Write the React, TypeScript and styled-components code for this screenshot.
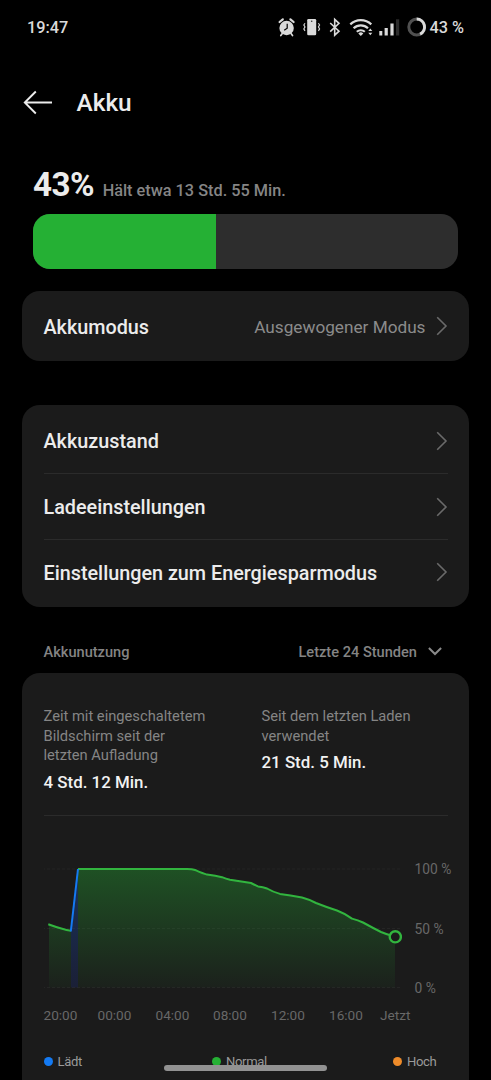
import React from 'react';
import styled, { createGlobalStyle } from 'styled-components';

const GlobalStyle = createGlobalStyle`
  * { box-sizing: border-box; }
  html, body { margin: 0; background: #000; height: 1080px; overflow: hidden; }
  body { font-family: Roboto, "Liberation Sans", sans-serif; color: #ececec; }
  svg { display: block; flex: none; }
`;

const Screen = styled.main`
  position: relative;
  width: 491px;
  height: 1080px;
  overflow: hidden;
  background: #000;
`;

const StatusBar = styled.header`
  display: flex;
  align-items: center;
  justify-content: space-between;
  height: 54px;
  padding: 0 27px;
  font-size: 16.3px;
  font-weight: 500;
  color: #dadada;
`;

const StatusIcons = styled.div`
  display: flex;
  align-items: center;
`;

const StatusPercent = styled.span`
  margin-left: 2px;
  white-space: nowrap;
`;

const TitleBar = styled.div`
  display: flex;
  align-items: center;
  gap: 23.5px;
  height: 98px;
  padding-left: 23px;
`;

const Title = styled.h1`
  margin: 0;
  font-size: 24.4px;
  font-weight: 500;
  line-height: 30px;
`;

const Summary = styled.section`
  padding: 15px 33px 0;
`;

const SummaryText = styled.div`
  display: flex;
  align-items: baseline;
  gap: 8.5px;
  height: 47px;
  line-height: 36px;
`;

const Level = styled.span`
  font-size: 33.2px;
  font-weight: 700;
  letter-spacing: -0.5px;
`;

const Remaining = styled.span`
  font-size: 16.3px;
  font-weight: 500;
  color: #858585;
  white-space: nowrap;
`;

const Gauge = styled.div`
  height: 55px;
  border-radius: 17px;
  overflow: hidden;
  background: #2d2d2d;
`;

const GaugeFill = styled.div`
  height: 100%;
  background: #25b034;
`;

const Card = styled.section<{ $top: number; $pad?: string }>`
  margin: ${(p) => p.$top}px 22px 0;
  padding: ${(p) => p.$pad ?? '0 21.5px'};
  border-radius: 18px;
  background: #1b1b1b;
`;

const Row = styled.div<{ $height: number; $divided?: boolean }>`
  display: flex;
  align-items: center;
  height: ${(p) => p.$height}px;
  border-top: ${(p) => (p.$divided ? '1px solid #2b2b2b' : '0')};
`;

const RowTitle = styled.span`
  flex: 1;
  padding-top: 2px;
  font-size: 19.8px;
  font-weight: 500;
  white-space: nowrap;
`;

const RowValue = styled.span`
  padding-top: 1px;
  margin-right: 10px;
  font-size: 17.2px;
  color: #8b8b8b;
  white-space: nowrap;
`;

const SectionHead = styled.div`
  display: flex;
  align-items: center;
  height: 44px;
  margin-top: 22px;
  padding: 2px 49px 0 43.5px;
  font-size: 14.6px;
  font-weight: 500;
  color: #848484;
`;

const Period = styled.span`
  display: flex;
  align-items: center;
  gap: 11px;
  margin-left: auto;
`;

const Stats = styled.div`
  display: grid;
  grid-template-columns: 218px 1fr;
  height: 109px;
  border-bottom: 1px solid #2b2b2b;
`;

const StatLabel = styled.div`
  font-size: 14.7px;
  line-height: 19.6px;
  color: #858585;
  white-space: pre-line;
`;

const StatValue = styled.div`
  margin-top: 4px;
  font-size: 16.9px;
  font-weight: 500;
  line-height: 24px;
  color: #f2f2f2;
`;

const ChartArea = styled.div`
  display: flex;
  margin-top: 43px;
`;

const Scale = styled.div`
  display: flex;
  flex-direction: column;
  justify-content: space-between;
  height: 139px;
  margin-left: 13px;
  font-size: 13.8px;
  line-height: 20px;
  color: #686868;
  white-space: nowrap;
`;

const Hours = styled.div`
  display: grid;
  grid-template-columns: 54px 58px 57.5px 58px 58px 51px auto;
  margin-top: 7px;
  font-size: 13.6px;
  line-height: 20px;
  color: #686868;
`;

const Legend = styled.div`
  display: grid;
  grid-template-columns: 168.5px 181px auto;
  margin-top: 27px;
`;

const LegendItem = styled.span`
  display: flex;
  align-items: center;
  gap: 5px;
  font-size: 13.1px;
  letter-spacing: -0.35px;
  line-height: 20px;
  color: #9a9a9a;
`;

const Dot = styled.i<{ $color: string }>`
  width: 9px;
  height: 9px;
  margin-bottom: 1px;
  border-radius: 50%;
  background: ${(p) => p.$color};
`;

const HomeIndicator = styled.div`
  position: absolute;
  left: 164px;
  top: 1065px;
  width: 163px;
  height: 6px;
  border-radius: 3px;
  background: #929292;
`;

const AlarmIcon = () => (
  <svg width="18" height="20" viewBox="278 17 18 20">
    <g stroke="#dadada" fill="none" strokeLinecap="round">
      <path d="M279.6 22 282.8 19.3M293.6 22 290.4 19.3" strokeWidth="2.2" />
      <path d="m282.3 33.5-1.5 2M291 33.5l1.5 2" strokeWidth="1.7" />
    </g>
    <circle cx="286.6" cy="28" r="7.2" fill="#dadada" />
    <path d="M287.2 23.8v4.5l-3 2" stroke="#000" strokeWidth="1.2" fill="none" />
  </svg>
);

const VibrateIcon = () => (
  <svg width="18" height="20" viewBox="303 17 18 20">
    <rect x="307.2" y="19" width="9" height="16.3" rx="1.3" fill="#dadada" />
    <circle cx="311.7" cy="21.3" r=".8" fill="#333" />
    <path d="M305 23.2l-1.2 1.7 1.2 2-1.2 2 1.2 2M318.4 23.2l1.2 1.7-1.2 2 1.2 2-1.2 2" fill="none" stroke="#dadada" strokeWidth="1.1" />
  </svg>
);

const BluetoothIcon = () => (
  <svg width="12" height="20" viewBox="329 17 12 20">
    <path d="M330.2 23 339 31.2l-4.3 4V19.3l4.3 4-8.8 8.3" fill="none" stroke="#dadada" strokeWidth="1.6" />
  </svg>
);

const WifiIcon = () => (
  <svg width="24" height="20" viewBox="349 17 24 20">
    <g fill="none" stroke="#dadada" strokeWidth="2.2">
      <path d="M350.3 24.4a15.2 15.2 0 0 1 21 0" />
      <path d="M353.6 28.2a10.4 10.4 0 0 1 14.4 0" />
      <path d="M356.8 31.8a6 6 0 0 1 8 0" />
    </g>
    <path d="m358.3 33.4a3.7 3.7 0 0 1 5 0l-2.5 2.7z" fill="#dadada" />
    <path d="m368.3 31 2-2.5 2 2.5zM368.3 32.8h4l-2 2.5z" fill="#dadada" />
  </svg>
);

const SignalIcon = () => (
  <svg width="21" height="20" viewBox="379 17 21 20">
    <path d="M379.3 31h3v4.5h-3zM384.6 28h3.2v7.5h-3.2zM390.4 23.5h3.2v12h-3.2z" fill="#dadada" />
    <path d="M396 19.3h3.2v16.2H396z" fill="#2c2c2c" />
  </svg>
);

const BatteryRing = () => (
  <svg width="20" height="20" viewBox="407 17.3 20 20">
    <circle cx="416.7" cy="27.3" r="7.9" fill="none" stroke="#505050" strokeWidth="3" />
    <path d="M416.7 19.4a7.9 7.9 0 0 1 3.4 15" fill="none" stroke="#dadada" strokeWidth="3" />
  </svg>
);

const BackArrow = () => (
  <svg width="30" height="26" viewBox="0 0 30 26">
    <path d="M12.8 1.5 1.8 12.5l11 11M2 12.5h27" fill="none" stroke="#ececec" strokeWidth="1.9" />
  </svg>
);

const Chevron = () => (
  <svg width="12" height="20" viewBox="0 0 12 20">
    <path d="M1.2 1.2 10 10l-8.8 8.8" fill="none" stroke="#6a6a6a" strokeWidth="1.6" />
  </svg>
);

const ChevronDown = () => (
  <svg width="14" height="10" viewBox="0 0 14 10">
    <path d="M.9 1 7 7l6.1-6" fill="none" stroke="#8a8a8a" strokeWidth="2" />
  </svg>
);

const CURVE =
  'L187 19Q192 19 196 20.3Q203 23.4 207 24.6Q216 26 222 27.2Q226 28.9 230 29.7L251 33Q255 35 258 36.4Q263 37 267 38.5Q272 41.5 280 43.9Q290 45 302 47.5Q308 49 316 53Q325 56.6 337 60.5Q346 64 352 68.6Q358 70 363 72.5Q373 78 381 82Q387 84.5 395 86.8';

const Chart = () => (
  <svg width="358" height="138" viewBox="44 9 358 138">
    <defs>
      <linearGradient id="level" x1="0" y1="19" x2="0" y2="138" gradientUnits="userSpaceOnUse">
        <stop offset="0" stopColor="#25b034" stopOpacity=".36" />
        <stop offset=".5" stopColor="#25b034" stopOpacity=".2" />
        <stop offset="1" stopColor="#25b034" stopOpacity=".04" />
      </linearGradient>
      <linearGradient id="charge" x1="0" y1="19" x2="0" y2="138" gradientUnits="userSpaceOnUse">
        <stop offset="0" stopColor="#1766d8" stopOpacity=".36" />
        <stop offset="1" stopColor="#183098" stopOpacity=".22" />
      </linearGradient>
    </defs>
    <path d="M42 19H401M42 78.5H401M42 137.5H401" stroke="#252525" strokeDasharray="3 2" />
    <path d="M49 74.5Q63 79.5 71 81V137.5H49Z" fill="url(#level)" />
    <path d="M71 81 78 19V137.5H71Z" fill="url(#charge)" />
    <path d={`M78 19${CURVE}V137.5H78Z`} fill="url(#level)" />
    <path d="M48.3 74.3Q63 79.7 71 80.8" fill="none" stroke="#32b53f" strokeWidth="2" />
    <path d={`M78 19${CURVE}`} fill="none" stroke="#32b53f" strokeWidth="2" />
    <path d="M70.8 81.5 78 19" fill="none" stroke="#147af2" strokeWidth="2" />
    <circle cx="395.3" cy="86.8" r="5.6" fill="#1b1b1b" stroke="#32b53f" strokeWidth="2.4" />
  </svg>
);

const HOURS = ['20:00', '00:00', '04:00', '08:00', '12:00', '16:00', 'Jetzt'];

const Push = styled.span<{ $gap: number }>`
  margin-left: ${(p) => p.$gap}px;
`;

export default function App() {
  return (
    <Screen>
      <GlobalStyle />
      <StatusBar>
        <span>19:47</span>
        <StatusIcons>
          <AlarmIcon />
          <Push $gap={7}><VibrateIcon /></Push>
          <Push $gap={8}><BluetoothIcon /></Push>
          <Push $gap={8}><WifiIcon /></Push>
          <Push $gap={6}><SignalIcon /></Push>
          <Push $gap={7}><BatteryRing /></Push>
          <StatusPercent>43 %</StatusPercent>
        </StatusIcons>
      </StatusBar>

      <TitleBar>
        <BackArrow />
        <Title>Akku</Title>
      </TitleBar>

      <Summary>
        <SummaryText>
          <Level>43%</Level>
          <Remaining>Hält etwa 13 Std. 55 Min.</Remaining>
        </SummaryText>
        <Gauge>
          <GaugeFill style={{ width: '43%' }} />
        </Gauge>
      </Summary>

      <Card $top={22}>
        <Row $height={70}>
          <RowTitle>Akkumodus</RowTitle>
          <RowValue>Ausgewogener Modus</RowValue>
          <Chevron />
        </Row>
      </Card>

      <Card $top={44} $pad="3px 21.5px 3px">
        <Row $height={65}><RowTitle>Akkuzustand</RowTitle><Chevron /></Row>
        <Row $height={66} $divided><RowTitle>Ladeeinstellungen</RowTitle><Chevron /></Row>
        <Row $height={65} $divided><RowTitle>Einstellungen zum Energiesparmodus</RowTitle><Chevron /></Row>
      </Card>

      <SectionHead>
        <span>Akkunutzung</span>
        <Period>Letzte 24 Stunden <ChevronDown /></Period>
      </SectionHead>

      <Card $top={0} $pad="34px 21.5px 40px">
        <Stats>
          <div>
            <StatLabel>{'Zeit mit eingeschaltetem\nBildschirm seit der\nletzten Aufladung'}</StatLabel>
            <StatValue>4 Std. 12 Min.</StatValue>
          </div>
          <div>
            <StatLabel>{'Seit dem letzten Laden\nverwendet'}</StatLabel>
            <StatValue>21 Std. 5 Min.</StatValue>
          </div>
        </Stats>
        <ChartArea>
          <Chart />
          <Scale>
            <span>100 %</span>
            <span>50 %</span>
            <span>0 %</span>
          </Scale>
        </ChartArea>
        <Hours>
          {HOURS.map((h) => <span key={h}>{h}</span>)}
        </Hours>
        <Legend>
          <LegendItem><Dot $color="#147af2" />Lädt</LegendItem>
          <LegendItem><Dot $color="#25b034" />Normal</LegendItem>
          <LegendItem><Dot $color="#ee8b2a" />Hoch</LegendItem>
        </Legend>
      </Card>
      <HomeIndicator />
    </Screen>
  );
}
